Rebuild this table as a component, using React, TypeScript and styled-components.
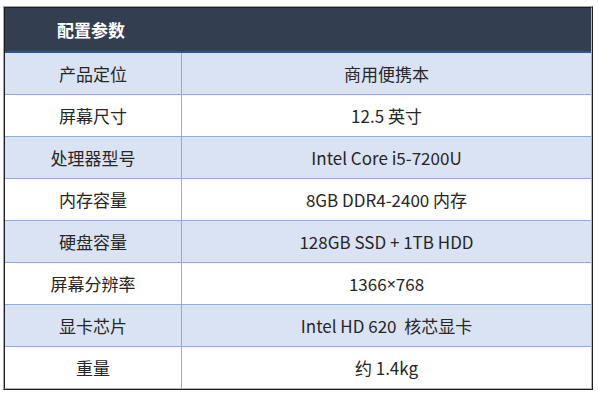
import React from 'react'
import styled, { createGlobalStyle } from 'styled-components'

const GlobalStyle = createGlobalStyle`
  html, body {
    margin: 0;
    padding: 0;
    background: #ffffff;
  }
  body {
    font-family: "Noto Sans CJK SC", sans-serif;
  }
`

const Page = styled.div`
  width: 598px;
  height: 400px;
  padding: 6px 5px 8px 3px;
  box-sizing: border-box;
`

const Frame = styled.div`
  border-left: 1px solid #a8a8a8;
  border-top: 1px solid #a8a8a8;
  border-right: 1px solid #1e1e1e;
  border-bottom: 1px solid #1e1e1e;
`

const Inner = styled.div`
  border-left: 1px solid #1e1e1e;
  border-top: 1px solid #1e1e1e;
  border-right: 1px solid #b4b4b4;
  border-bottom: 1px solid #b4b4b4;
`

const Header = styled.div`
  height: 43px;
  background: #333f50;
  border-bottom: 2px solid #2f5597;
  display: flex;
  align-items: center;
  padding-left: 52px;
  color: #ffffff;
  font-family: "Noto Sans CJK SC", sans-serif;
  font-weight: 700;
  font-size: 17px;
`

const Row = styled.div<{ $shade: boolean; $last?: boolean }>`
  display: grid;
  grid-template-columns: 177px 1fr;
  height: 41px;
  background: ${p => (p.$shade ? '#dae3f3' : '#ffffff')};
  border-bottom: ${p => (p.$last ? 'none' : '1px solid #8faadc')};
`

const Cell = styled.div<{ $left?: boolean }>`
  display: flex;
  align-items: center;
  justify-content: center;
  font-family: "Noto Sans CJK SC", sans-serif;
  font-size: 17px;
  color: #262626;
  border-right: ${p => (p.$left ? '1px solid #8faadc' : 'none')};
  white-space: pre;
`

// the multiplication sign is narrow (latin) in the original
const Times = styled.span`
  font-family: "Noto Sans", sans-serif;
  font-size: 16px;
`

const specs: [string, string][] = [
  ['产品定位', '商用便携本'],
  ['屏幕尺寸', '12.5 英寸'],
  ['处理器型号', 'Intel Core i5-7200U'],
  ['内存容量', '8GB DDR4-2400 内存'],
  ['硬盘容量', '128GB SSD + 1TB HDD'],
  ['屏幕分辨率', '1366×768'],
  ['显卡芯片', 'Intel HD 620  核芯显卡'],
  ['重量', '约 1.4kg'],
]

const renderValue = (v: string) => {
  const parts = v.split('×')
  if (parts.length === 1) return v
  return (
    <>
      {parts[0]}
      <Times>×</Times>
      {parts[1]}
    </>
  )
}

export default function App() {
  return (
    <>
      <GlobalStyle />
      <Page>
        <Frame>
          <Inner>
            <Header>配置参数</Header>
            {specs.map(([k, v], i) => (
              <Row key={k} $shade={i % 2 === 0} $last={i === specs.length - 1}>
                <Cell $left>{k}</Cell>
                <Cell>{renderValue(v)}</Cell>
              </Row>
            ))}
          </Inner>
        </Frame>
      </Page>
    </>
  )
}
